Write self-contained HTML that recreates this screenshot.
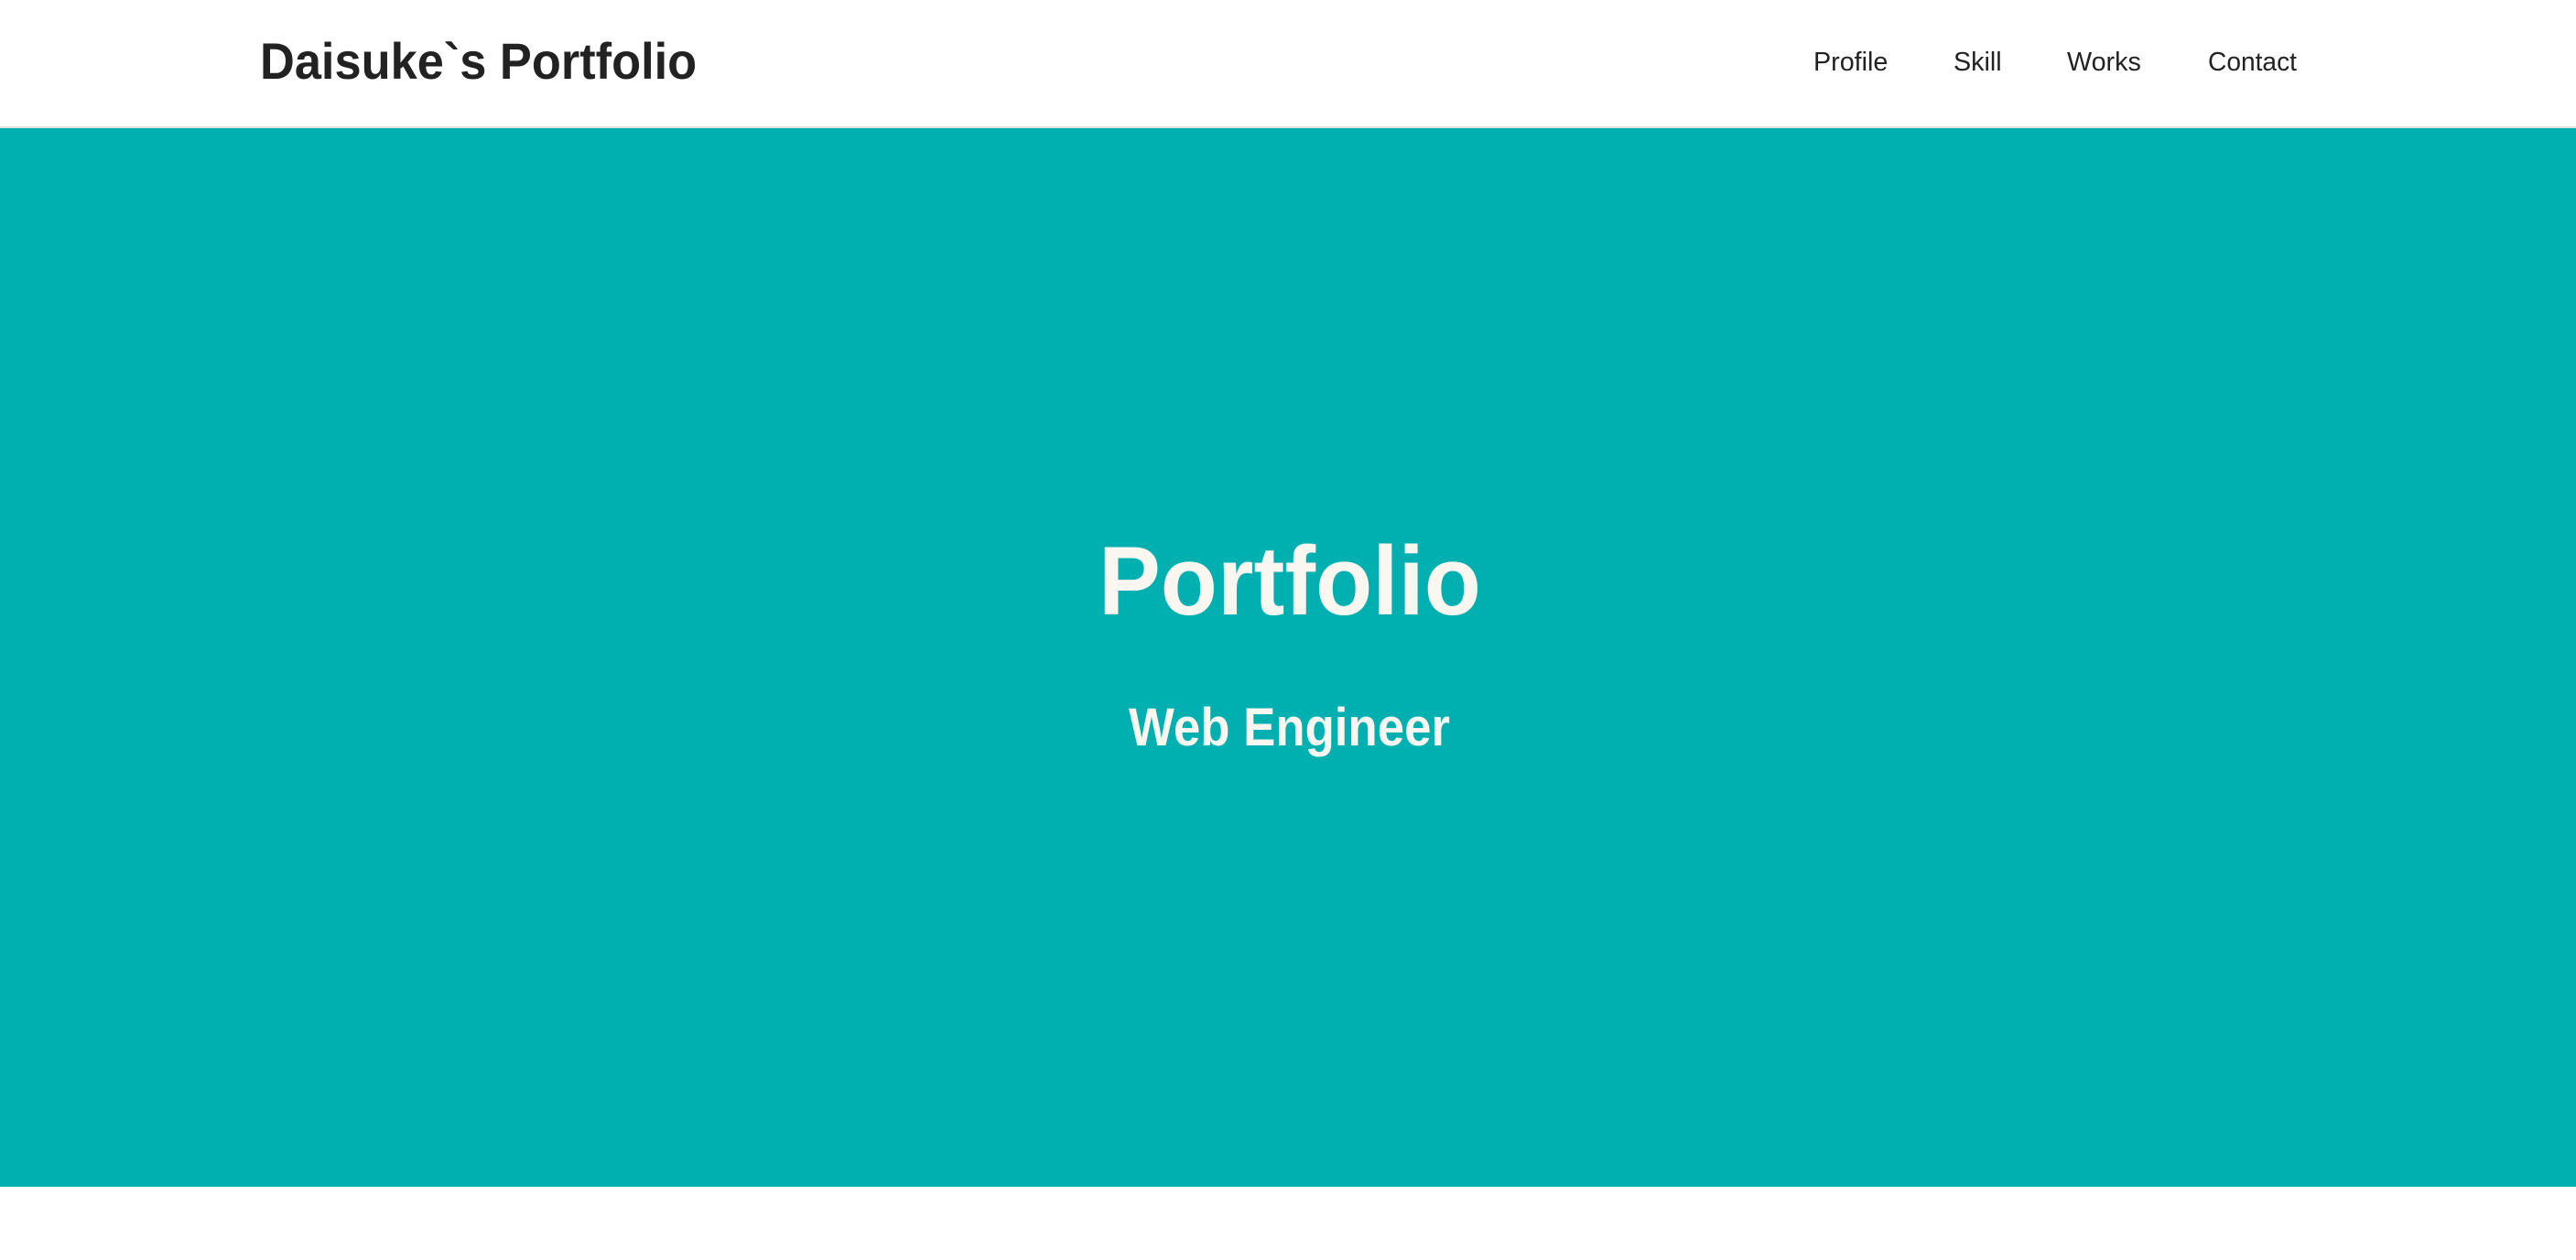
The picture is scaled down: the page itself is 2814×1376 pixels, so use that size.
<!DOCTYPE html>
<html><head><meta charset="utf-8"><style>
html,body{margin:0;padding:0;width:2814px;height:1376px;background:#fff;overflow:hidden;font-family:"Liberation Sans",sans-serif;}
.hdr{position:absolute;left:0;top:0;width:2814px;height:138px;background:#fff;border-bottom:2px solid #e2e2e2;}
.t{position:absolute;white-space:nowrap;transform-origin:0 0;}
.hero{position:absolute;left:0;top:140px;width:2814px;height:1156px;background:#00b0b0;}
</style></head><body>
<div class="hdr"></div>
<div class="t" style="left:284px;top:35px;font-size:56px;line-height:64px;font-weight:bold;color:#222;transform:scaleX(0.935);">Daisuke`s Portfolio</div>
<div class="t" style="left:1981px;top:51px;font-size:29px;line-height:34px;color:#222;transform:scaleX(0.99);">Profile</div>
<div class="t" style="left:2134px;top:51px;font-size:29px;line-height:34px;color:#222;transform:scaleX(0.99);">Skill</div>
<div class="t" style="left:2258px;top:51px;font-size:29px;line-height:34px;color:#222;transform:scaleX(0.99);">Works</div>
<div class="t" style="left:2412px;top:51px;font-size:29px;line-height:34px;color:#222;transform:scaleX(0.97);">Contact</div>
<div class="hero"></div>
<div class="t" style="left:1200px;top:574px;font-size:107px;line-height:120px;font-weight:bold;color:#faf6f0;transform:scaleX(0.95);">Portfolio</div>
<div class="t" style="left:1233px;top:762px;font-size:58px;line-height:66px;font-weight:bold;color:#faf6f0;transform:scaleX(0.91);">Web Engineer</div>
</body></html>
